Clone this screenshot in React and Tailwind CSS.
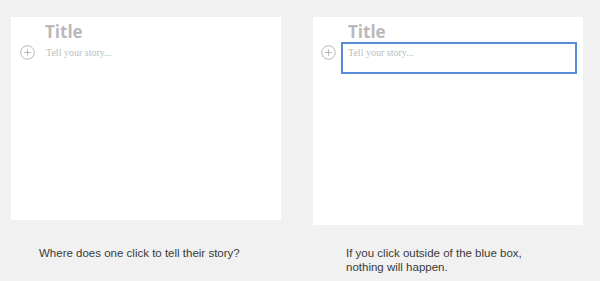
import React from "react";

function Plus({ className = "" }) {
  return (
    <svg width="15" height="15" viewBox="0 0 15 15" className={"shrink-0 " + className}>
      <circle cx="7.5" cy="7.5" r="6.8" fill="none" stroke="#b8b8b8" strokeWidth="1" />
      <path d="M7.5 4.2v6.6M4.2 7.5h6.6" stroke="#b8b8b8" strokeWidth="1" fill="none" />
    </svg>
  );
}

export default function App() {
  return (
    <div className="w-[600px] h-[281px] bg-[#f1f1f1] flex pl-[11px] pt-[17px] gap-[32px] overflow-hidden">
      <div className="flex flex-col w-[270px]">
        <div className="bg-white h-[203px] pt-[5px]">
          <div className="pl-[34px] font-['Open_Sans'] font-bold text-[17px] leading-[20px] text-[#b9b9b9]">Title</div>
          <div className="flex items-center pl-[9px] mt-[3px] gap-[11px]">
            <Plus />
            <div className="font-['Liberation_Serif'] text-[10px] text-[#bdbdbd]">Tell your story...</div>
          </div>
        </div>
        <div className="pl-[28px] mt-[26px] font-['Liberation_Sans'] text-[11.5px] leading-[14px] text-[#3a3a3a]">
          Where does one click to tell their story?
        </div>
      </div>
      <div className="flex flex-col w-[270px]">
        <div className="bg-white h-[208px] pt-[5px]">
          <div className="pl-[35px] font-['Open_Sans'] font-bold text-[17px] leading-[20px] text-[#b9b9b9]">Title</div>
          <div className="flex items-start pl-[8px] gap-[5px]">
            <Plus className="mt-[3px]" />
            <div className="w-[236px] h-[32px] border-2 border-[#5b8bd8] pl-[5px] pt-[1px] font-['Liberation_Serif'] text-[10px] text-[#bdbdbd]">
              Tell your story...
            </div>
          </div>
        </div>
        <div className="pl-[33px] mt-[21px] font-['Liberation_Sans'] text-[11.5px] leading-[14px] text-[#3a3a3a]">
          If you click outside of the blue box,
          <br />
          nothing will happen.
        </div>
      </div>
    </div>
  );
}
